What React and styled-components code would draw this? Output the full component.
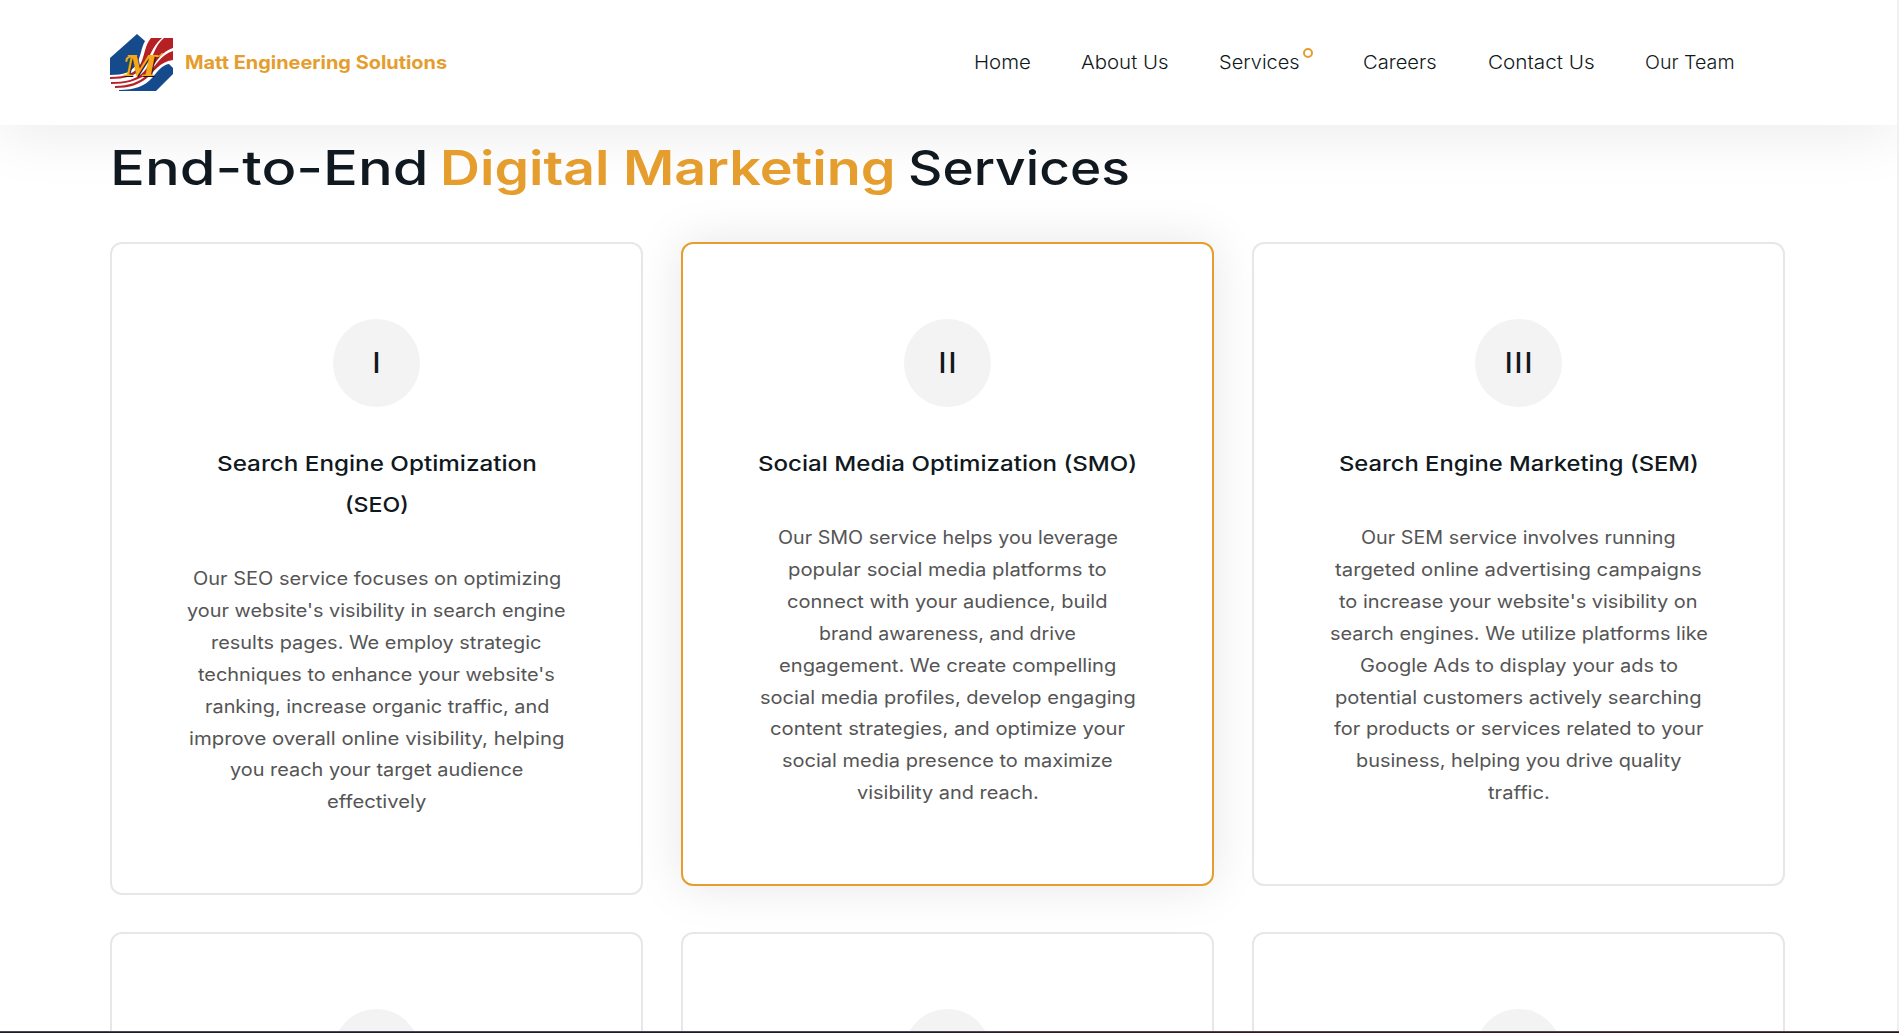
import React, { useLayoutEffect, useRef, useState } from 'react';
import styled, { createGlobalStyle } from 'styled-components';

const gold = '#e59d2e';
const ink = '#101820';

const Global = createGlobalStyle`
  * { box-sizing: border-box; }
  html, body { margin: 0; height: 100%; overflow: hidden; background: #fff; }
  body { font-family: Inter, "Liberation Sans", sans-serif; color: ${ink}; }
  h1, h2, h3, p { margin: 0; }
`;

const Page = styled.div`
  display: flex;
  flex-direction: column;
  height: 1033px;
  width: 100%;
  overflow: hidden;
`;

const Viewport = styled.div`
  flex: 1;
  min-height: 0;
  overflow: hidden;
  border-right: 2px solid #f0f0f0;
`;

const Header = styled.header`
  display: flex;
  align-items: center;
  justify-content: space-between;
  height: 125px;
  padding: 0 162px 0 110px;
  background: #fff;
  box-shadow: 0 10px 60px rgba(0, 0, 0, 0.08);
`;

const Brand = styled.a`
  display: flex;
  align-items: center;
  gap: 12px;
  color: ${gold};
  font-size: 18.4px;
  font-weight: 680;
  line-height: 22px;

  > span { margin-bottom: 2px; }
`;

const LineBox = styled.span`
  display: block;
  width: ${(p) => p.$w}px;
  white-space: nowrap;
`;

const LineText = styled.span`
  display: inline-block;
  transform-origin: 0 50%;
`;

function Line({ w, children }) {
  const ref = useRef(null);
  const [k, setK] = useState(1);
  useLayoutEffect(() => {
    setK(w / ref.current.offsetWidth);
  }, [w, children]);
  return (
    <LineBox $w={w}>
      <LineText ref={ref} style={{ transform: `scaleX(${k})` }}>{children}</LineText>
    </LineBox>
  );
}

const Nav = styled.nav`
  display: flex;
  gap: 50.4px;
  font-size: 18.8px;
  line-height: 28px;
`;

const NavItem = styled.a`
  position: relative;
  margin-right: ${(p) => (p.$open ? 12.5 : 0)}px;
  color: ${ink};
  font-weight: 350;
`;

const Dot = styled.i`
  position: absolute;
  top: -1px;
  right: -13px;
  width: 10px;
  height: 10px;
  border: 2px solid ${gold};
  border-radius: 50%;
`;

const Main = styled.main`
  padding: 14px 112px 0 110px;
`;

const Heading = styled.h1`
  display: flex;
  justify-content: space-between;
  width: 1020px;
  height: 103px;
  font-size: 47.5px;
  line-height: 58px;
  white-space: nowrap;
`;

const Word = styled.span`
  color: ${(p) => (p.$accent ? gold : ink)};
  font-weight: ${(p) => (p.$accent ? 600 : 520)};
`;

const Grid = styled.div`
  display: grid;
  grid-template-columns: repeat(3, 533px);
  column-gap: 38px;
  row-gap: 37px;
  align-items: start;
`;

const Card = styled.article`
  display: flex;
  flex-direction: column;
  align-items: center;
  padding: 75px 0;
  border: 2px solid ${(p) => (p.$active ? gold : '#e7e7e7')};
  border-radius: 12px;
  box-shadow: ${(p) => (p.$active ? '0 0 50px rgba(0, 0, 0, 0.1)' : 'none')};
`;

const Numeral = styled.div`
  display: flex;
  align-items: center;
  justify-content: center;
  width: 87px;
  height: 88px;
  padding: 0 0 2px 2px;
  border-radius: 50%;
  background: #f3f3f3;
  font-size: 29px;
  font-weight: 500;
  letter-spacing: 2px;
`;

const Title = styled.h3`
  display: flex;
  flex-direction: column;
  align-items: center;
  margin: 36px 0 38px;
  font-size: 20.6px;
  font-weight: 480;
  line-height: 41px;
`;

const Copy = styled.p`
  display: flex;
  flex-direction: column;
  align-items: center;
  color: #555;
  font-size: 18.2px;
  font-weight: 380;
  line-height: 31.9px;
`;

const Strip = styled.div`
  flex: none;
  height: 2px;
  border-top: 1px solid #4a4650;
  background: linear-gradient(90deg, #1b1c35, #1f1838 48%, #3c1420 54%, #461418 80%, #2e1214);
`;

const LogoM = styled.text`
  font-family: "Liberation Serif", serif;
  font-size: 31px;
  font-style: italic;
  font-weight: 700;
`;

const Logo = () => (
  <svg width="63" height="57" viewBox="0 0 63 57">
    <path d="M0 24 27 0l8 7c-4 7-4 16-9 24-5 7-12 10-26 10z" fill="#154a8c" />
    <path d="M41 4h11C42 12 40 24 33 33 26 42 15 45 0 45v-2c17 0 26-4 31-14 4-9 4-18 10-25z" fill="#b62025" />
    <path d="M54 4h9v10C48 19 46 31 37 40 27 47 15 50 1 50v-2c18 1 29-5 35-13C43 25 44 12 54 4z" fill="#b62025" />
    <path d="M63 17v9c-14 2-18 11-26 18-9 7-18 10-32 10v-2c14 0 24-4 32-11 9-9 13-20 26-24z" fill="#b62025" />
    <path d="M9 57v-1c16 0 26-4 33-12 6-7 10-13 17-14l4 4v6L46 57H9z" fill="#154a8c" />
    <LogoM x="15" y="43.3" textLength="33" lengthAdjust="spacingAndGlyphs" fill="#1d1208">M</LogoM>
    <LogoM x="14" y="42.3" textLength="33" lengthAdjust="spacingAndGlyphs" fill="#f5a81c">M</LogoM>
    <path d="M25 22.500c-5-1-9 1-8.500 4.500" fill="none" stroke="#f5a81c" strokeWidth="2" strokeLinecap="round" />
    <path d="M46 22.500c3 0 5-1 6-3" fill="none" stroke="#f5a81c" strokeWidth="1.500" strokeLinecap="round" />
  </svg>
);

const nav = [
  ['Home', 56.5],
  ['About Us', 88],
  ['Services', 81],
  ['Careers', 74],
  ['Contact Us', 107],
  ['Our Team', 90],
];

const services = [
  {
    numeral: 'I',
    title: [['Search Engine Optimization', 320], ['(SEO)', 64]],
    copy: [
      ['Our SEO service focuses on optimizing', 368],
      ["your website's visibility in search engine", 379],
      ['results pages. We employ strategic', 331],
      ["techniques to enhance your website's", 357],
      ['ranking, increase organic traffic, and', 344],
      ['improve overall online visibility, helping', 375],
      ['you reach your target audience', 293],
      ['effectively', 99],
    ],
  },
  {
    numeral: 'II',
    active: true,
    title: [['Social Media Optimization (SMO)', 379]],
    copy: [
      ['Our SMO service helps you leverage', 340],
      ['popular social media platforms to', 319],
      ['connect with your audience, build', 321],
      ['brand awareness, and drive', 257],
      ['engagement. We create compelling', 337],
      ['social media profiles, develop engaging', 376],
      ['content strategies, and optimize your', 355],
      ['social media presence to maximize', 331],
      ['visibility and reach.', 182],
    ],
  },
  {
    numeral: 'III',
    title: [['Search Engine Marketing (SEM)', 360]],
    copy: [
      ['Our SEM service involves running', 315],
      ['targeted online advertising campaigns', 367],
      ["to increase your website's visibility on", 359],
      ['search engines. We utilize platforms like', 378],
      ['Google Ads to display your ads to', 318],
      ['potential customers actively searching', 367],
      ['for products or services related to your', 370],
      ['business, helping you drive quality', 325],
      ['traffic.', 62],
    ],
  },
];

const upcoming = ['web', 'content', 'email'];

export default function App() {
  return (
    <Page>
      <Global />
      <Viewport>
        <Header>
          <Brand>
            <Logo />
            <Line w={262}>Matt Engineering Solutions</Line>
          </Brand>
          <Nav>
            {nav.map(([label, w]) => (
              <NavItem key={label} $open={label === 'Services'}>
                <Line w={w}>{label}</Line>
                {label === 'Services' && <Dot />}
              </NavItem>
            ))}
          </Nav>
        </Header>
        <Main>
          <Heading>
            <Word><Line w={318}>End-to-End</Line></Word>
            <Word $accent><Line w={170}>Digital</Line></Word>
            <Word $accent><Line w={273}>Marketing</Line></Word>
            <Word><Line w={222}>Services</Line></Word>
          </Heading>
          <Grid>
            {services.map((s) => (
              <Card key={s.numeral} $active={s.active}>
                <Numeral>{s.numeral}</Numeral>
                <Title>
                  {s.title.map(([t, w]) => <Line key={t} w={w}>{t}</Line>)}
                </Title>
                <Copy>
                  {s.copy.map(([t, w]) => <Line key={t} w={w}>{t}</Line>)}
                </Copy>
              </Card>
            ))}
            {upcoming.map((id) => (
              <Card key={id}>
                <Numeral />
              </Card>
            ))}
          </Grid>
        </Main>
      </Viewport>
      <Strip />
    </Page>
  );
}
